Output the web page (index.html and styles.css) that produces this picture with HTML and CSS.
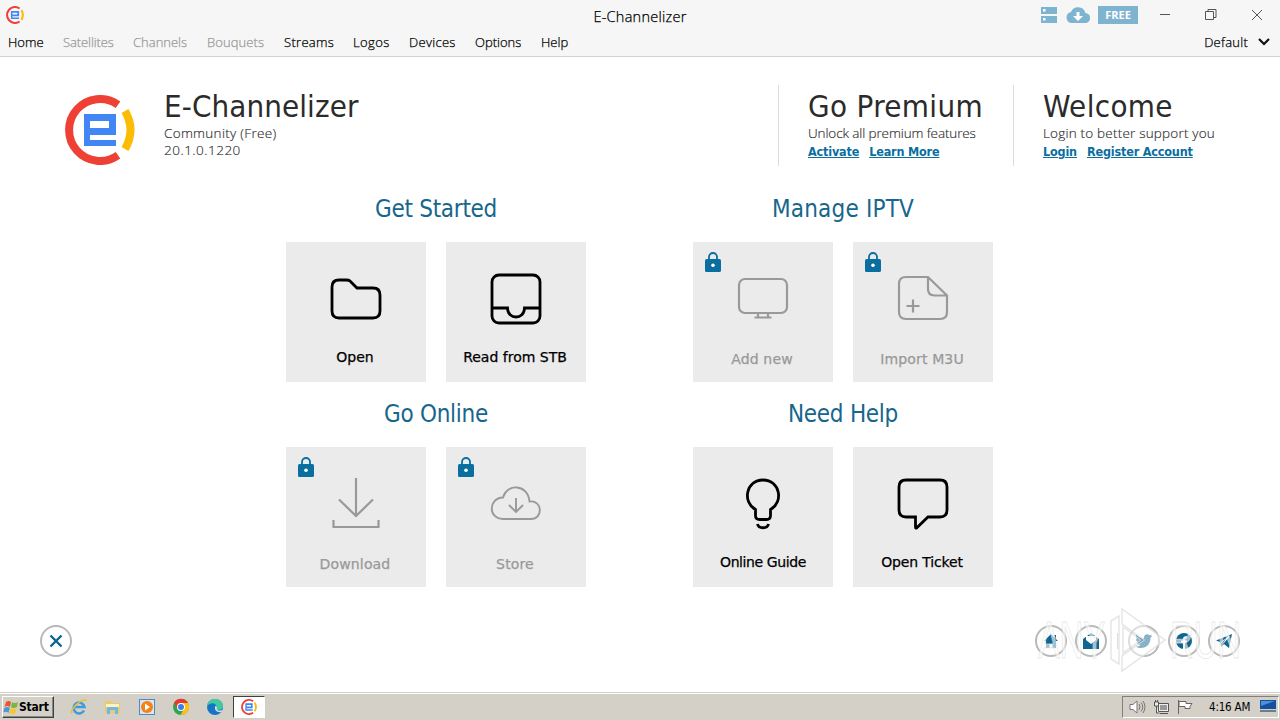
FILE: index.html
```
<!DOCTYPE html>
<html lang="en">
<head>
    <meta charset="UTF-8">
    <meta name="viewport" content="width=device-width, initial-scale=1.0">
    <title>E-Channelizer</title>
    <link rel="stylesheet" href="styles.css">
</head>
<body>
    <!-- shared symbols -->
    <svg class="symbols" width="0" height="0">
        <symbol id="logo" viewBox="0 0 70 70">
            <path d="M53 9.700A31 31 0 1 0 53 60.300" fill="none" stroke="#ee4035" stroke-width="8"/>
            <path d="M60 16Q71 35 60 54" fill="none" stroke="#fbbc05" stroke-width="8"/>
            <path fill="#4285f4" fill-rule="evenodd" d="M19 19h32v21H25v5h26v6H19zM25 26v7h19v-7z"/>
        </symbol>
        <symbol id="lock" viewBox="0 0 16 20">
            <path d="M4 8V5a4 4 0 0 1 8 0v3" fill="none" stroke="#0a6e9f" stroke-width="1.8"/>
            <rect x="0" y="7" width="16" height="13" rx="1.6" fill="#0a6e9f"/>
            <circle cx="8" cy="13.3" r="1.8" fill="#fff"/>
        </symbol>
    </svg>

    <header class="header">
        <div class="titlebar">
            <svg class="app-icon" width="18" height="18"><use href="#logo"/></svg>
            <div class="title">E-Channelizer</div>
            <div class="window-tools">
                <svg width="16" height="16" viewBox="0 0 16 16"><path fill="#7fb4d1" d="M0 0h16v7H0zM0 9h16v7H0z"/><path fill="#fff" d="M2 2h2.500v2.500H2zM2 11h2.500v2.500H2z"/></svg>
                <svg class="cloud" width="24" height="16" viewBox="0 0 24 16"><path fill="#7fb4d1" d="M6 16a5.500 5.500 0 0 1-1-10.900A7.500 7.500 0 0 1 19.300 6 5 5 0 0 1 19 16z"/><path fill="#fff" d="M10.500 5h3v4H17l-5 5-5-5h3.500z"/></svg>
                <span class="badge">FREE</span>
                <svg class="win-buttons" width="104" height="14" viewBox="0 0 104 14" fill="none" stroke="#555"><path d="M0 6.500h10"/><path d="M45.500 3.500h8v8h-8zM48 3.500v-2h8v8h-2.500M92 2l10 10M102 2L92 12"/></svg>
            </div>
        </div>
        <nav class="menu">
            <span class="home">Home</span>
            <span class="off satellites">Satellites</span>
            <span class="off channels">Channels</span>
            <span class="off bouquets">Bouquets</span>
            <span class="streams">Streams</span>
            <span class="logos">Logos</span>
            <span class="devices">Devices</span>
            <span class="options">Options</span>
            <span class="help">Help</span>
            <span class="profile">Default <svg width="12" height="8" viewBox="0 0 12 8"><path d="M1 1l5 5 5-5" fill="none" stroke="#111" stroke-width="2.200"/></svg></span>
        </nav>
    </header>

    <section class="top">
        <svg class="logo" width="70" height="70"><use href="#logo"/></svg>
        <div class="product">
            <h1>E-Channelizer</h1>
            <p class="community">Community (Free)</p>
            <p class="version">20.1.0.1220</p>
        </div>
        <div class="info premium">
            <h1>Go Premium</h1>
            <p>Unlock all premium features</p>
            <div class="links"><a>Activate</a><a>Learn More</a></div>
        </div>
        <div class="info welcome">
            <h1>Welcome</h1>
            <p>Login to better support you</p>
            <div class="links"><a>Login</a><a>Register Account</a></div>
        </div>
    </section>

    <main class="groups">
        <section>
            <h2>Get Started</h2>
            <div class="tiles">
                <div class="tile">
                    <svg width="52" height="52" viewBox="0 0 52 52"><path d="M9 7h7q3 0 4 1l7 7h16q7 0 7 7V38q0 7-7 7H9q-7 0-7-7V14q0-7 7-7z"/></svg>
                    <span>Open</span>
                </div>
                <div class="tile">
                    <svg width="52" height="52" viewBox="0 0 52 52"><rect x="2" y="2" width="48" height="48" rx="7"/><path d="M2 35h15.500c0 12 17 12 17 0H50"/></svg>
                    <span>Read from STB</span>
                </div>
            </div>
        </section>
        <section>
            <h2 class="wide">Manage IPTV</h2>
            <div class="tiles">
                <div class="tile locked">
                    <svg class="lock" width="16" height="20"><use href="#lock"/></svg>
                    <svg width="52" height="52" viewBox="0 0 52 52"><rect x="2" y="6" width="48" height="34" rx="6"/><path d="M21 40v4M31 40v4M17.500 44.500h17"/></svg>
                    <span>Add new</span>
                </div>
                <div class="tile locked">
                    <svg class="lock" width="16" height="20"><use href="#lock"/></svg>
                    <svg width="52" height="52" viewBox="0 0 52 52"><path d="M9 4h22l19 18.500V39q0 7-7 7H9q-7 0-7-7V11q0-7 7-7zM31 4v12q0 6.500 6.500 6.500H50M16 26.500v13M9.500 33h13"/></svg>
                    <span>Import M3U</span>
                </div>
            </div>
        </section>
        <section>
            <h2>Go Online</h2>
            <div class="tiles">
                <div class="tile locked">
                    <svg class="lock" width="16" height="20"><use href="#lock"/></svg>
                    <svg width="52" height="52" viewBox="0 0 52 52"><path d="M26 0v38M9 21.500L26 38l17-16.500M3.500 42v7h45v-7"/></svg>
                    <span>Download</span>
                </div>
                <div class="tile locked">
                    <svg class="lock" width="16" height="20"><use href="#lock"/></svg>
                    <svg class="thin" width="52" height="52" viewBox="0 0 52 52"><path d="M13 41C-2 41-2 20 13 19.500 17 5 38 6 39.500 23.500 53 22 53 41 41 41zM26 20v14M19 27l7 7 7-7"/></svg>
                    <span>Store</span>
                </div>
            </div>
        </section>
        <section>
            <h2>Need Help</h2>
            <div class="tiles">
                <div class="tile">
                    <svg width="52" height="52" viewBox="0 0 52 52"><path d="M18.500 31.500C5 24 9 2 26 2s21 22 7.500 29.500v6q0 4-4 4h-7q-4 0-4-4zM20.500 46c1 5 10 5 11 0"/></svg>
                    <span class="guide">Online Guide</span>
                </div>
                <div class="tile">
                    <svg width="52" height="52" viewBox="0 0 52 52"><path d="M9 2h34q7 0 7 7v23q0 7-7 7H31L19.500 50q-1 .5-1-1V39H9q-7 0-7-7V9q0-7 7-7z"/></svg>
                    <span class="ticket">Open Ticket</span>
                </div>
            </div>
        </section>
    </main>

    <footer class="footer">
        <div class="round"><svg width="14" height="14" viewBox="0 0 14 14"><path d="M1.500 1.500l11 11M12.500 1.500l-11 11" stroke="#0e6590" stroke-width="2.400"/></svg></div>
        <div class="social">
            <div class="round"><svg width="16" height="16" viewBox="0 0 16 16"><path d="M8 1l7 7h-2v7H9.500v-4h-3v4H3V8H1zM11 2h2v4z"/></svg></div>
            <div class="round"><svg width="18" height="18" viewBox="0 0 18 18"><path d="M1 7l8-6 8 6v10H1z"/><path d="M4 4h10v4l-5 4-5-4z" fill="#fff"/></svg></div>
            <i class="divider"></i>
            <div class="round"><svg width="18" height="18" viewBox="0 0 24 24"><path d="M23 5c-1 .4-1.600.6-2.500.7 1-.6 1.600-1.400 2-2.500-1 .5-2 1-3 1.200C16 1 11 4 12 8.500 8 8.300 4.500 6.500 2 3.500c-1.300 2.200-.6 5 1.500 6.300-.8 0-1.500-.2-2.200-.6 0 2.200 1.600 4.200 3.800 4.700-.7.200-1.400.2-2.100.1.600 1.900 2.300 3.200 4.300 3.300C5.300 19 3 19.600.7 19.300 11 25 21 18 20.700 7.500 21.600 6.800 22.400 6 23 5z"/></svg></div>
            <div class="round"><svg width="18" height="18" viewBox="0 0 18 18"><circle cx="9" cy="9" r="8"/><path d="M8 17v-6H6V8.500h2V7q0-3.300 4-2.700v2q-2-.3-2 1.200v1h2l-.4 2.500H10v6z" fill="#fff"/></svg></div>
            <div class="round"><svg width="18" height="16" viewBox="0 0 18 16"><path d="M1 7.500L17 1l-3 14-5-4-2.500 3L5 9z"/><path d="M6 9.500l8-6-6 7" fill="none" stroke="#fff"/></svg></div>
            <div class="watermark">
                <span class="any">ANY</span>
                <svg width="58" height="66" viewBox="0 0 58 66"><path fill-rule="evenodd" d="M13 2l43 31-43 31V49l22-16-22-16zM2 14l8-5v48l-8-5zM14 20l18 13-18 13z"/></svg>
                <span class="run">RUN</span>
            </div>
        </div>
    </footer>

    <div class="taskbar">
        <div class="start">
            <svg width="16" height="16" viewBox="0 0 16 16"><path d="M3 3q3-2 5 0L7 8Q4 6 1.500 8z" fill="#e9572b"/><path d="M9 3.300q3 1.500 6-.3L14 8q-3 2-6 .2z" fill="#75b943"/><path d="M1.300 9q3-2 5.500 0L5.500 14q-2-2-5.200-.5z" fill="#4b96d2"/><path d="M7.800 9.300q3 1.500 6-.2L12.500 14q-3 2-6 .3z" fill="#fac52d"/></svg>
            <b>Start</b>
        </div>
        <div class="apps">
            <svg width="18" height="18" viewBox="0 0 18 18"><path d="M14 12.500a5.500 5.500 0 1 1 .5-3.500H4.500" fill="none" stroke="#3c9cdc" stroke-width="2.600"/><path d="M2 15.500C-1 12 12-.5 16.500 2.500" fill="none" stroke="#e9bf3c" stroke-width="1.600"/></svg>
            <svg width="18" height="18" viewBox="0 0 18 18"><path d="M1 3h6l1 2h8v10H1z" fill="#e9ca6d"/><path d="M2 6h13v3H2z" fill="#fff3bd"/><path d="M3 16V10q0-1 1-1h9q1 0 1 1v6h-3v-4H6v4z" fill="#6fb8e0"/></svg>
            <svg width="18" height="18" viewBox="0 0 18 18"><rect x="1.500" y="1.500" width="15" height="15" fill="#d6e6f3" stroke="#4b8bc6"/><circle cx="9" cy="9" r="6" fill="#f58216"/><path d="M7 5.500l5 3.500-5 3.500z" fill="#fff"/></svg>
            <svg width="18" height="18" viewBox="0 0 18 18"><circle cx="9" cy="9" r="8" fill="#32a350"/><path d="M2 5a8 8 0 0 1 14 0H9L6 11z" fill="#e33b2e"/><path d="M16 5a8 8 0 0 1-7.500 12L12 11 9 5z" fill="#fbc116"/><circle cx="9" cy="9" r="4" fill="#fff"/><circle cx="9" cy="9" r="3" fill="#3d7de8"/></svg>
            <svg width="18" height="18" viewBox="0 0 18 18"><circle cx="9" cy="9" r="8" fill="#1774c5"/><path d="M1 9C1-2 17-1 17 8q0 4-5 4-2 0-1.500-2C11 4 3 4 1 9z" fill="#43c9a0"/><path d="M9 8q-1 7 6.500 6l1-2Q10 14 11 9.500 11 8 9 8z" fill="#d5dfe1"/></svg>
            <div class="active-app"><svg width="16" height="16"><use href="#logo"/></svg></div>
        </div>
        <div class="tray">
            <svg width="17" height="16" viewBox="0 0 17 16" fill="#fff" stroke="#777"><path d="M1 5.500h3L8 2v12l-4-3.500H1z"/><path d="M10 5q2 3 0 6M12 3.500q3.500 4.500 0 9M14 2q4 6 0 12" fill="none"/></svg>
            <svg width="17" height="16" viewBox="0 0 17 16" fill="#eee" stroke="#555"><path d="M5.500 4.500h10v8h-10zM7 14.500h8M1.500 3v4h4V3zM2.500 1v2M4.500 1v2M3.500 7v7h3"/><path fill="#999" stroke="none" d="M7 6h7v5H7z"/></svg>
            <svg width="17" height="16" viewBox="0 0 17 16" fill="#fff" stroke="#666"><path d="M1.500 1v14M2 2.500h7v2h6l-2 3 0 2H8v-2H2z"/></svg>
            <span>4:16 AM</span>
            <svg class="desktop" width="16" height="13" viewBox="0 0 16 13"><path d="M0 0h16v9H0z" fill="#174f9f"/><path d="M1 1h14L1 6z" fill="#4b91d8"/><path d="M0 10h16v2H0z" fill="#6b7c92"/></svg>
        </div>
    </div>
</body>
</html>
```
FILE: styles.css
```
* {
    box-sizing: border-box;
}
body {
    margin: 0;
    width: 1280px;
    height: 720px;
    overflow: hidden;
    background-color: #fff;
    color: #2b2b2b;
    font-family: "DejaVu Sans Condensed", "DejaVu Sans", sans-serif;
    display: flex;
    flex-direction: column;
}
h1, h2, p {
    margin: 0;
    font-weight: normal;
    white-space: nowrap;
}
svg {
    display: block;
    flex: none;
}
.symbols {
    position: absolute;
}

/* header */
.header {
    height: 57px;
    flex: none;
    background-color: #f6f6f6;
    border-bottom: 1px solid #d3d3d3;
    font-family: "Open Sans", sans-serif;
    color: #000;
}
.titlebar {
    height: 32px;
    display: grid;
    grid-template-columns: 500px 280px 500px;
    align-items: center;
}
.app-icon {
    margin: -2px 0 0 6px;
}
.title {
    text-align: center;
    font-size: 14.5px;
    font-weight: 300;
    letter-spacing: .25px;
    padding-top: 1px;
    -webkit-text-stroke: .25px;
}
.window-tools {
    display: flex;
    align-items: center;
    padding: 0 0 2px 261px;
}
.cloud {
    margin-left: 9px;
}
.badge {
    width: 40px;
    height: 18px;
    margin-left: 8px;
    background-color: #7fb4d1;
    color: #fff;
    font-size: 11px;
    font-weight: bold;
    line-height: 18px;
    text-align: center;
}
.win-buttons {
    margin-left: 22px;
}
.menu {
    display: flex;
    gap: 19px;
    padding-left: 8px;
    font-size: 13px;
    font-weight: 300;
    line-height: 20px;
    white-space: nowrap;
    -webkit-text-stroke: .25px;
}
.off {
    color: #999;
}
.home {
    width: 36px;
}
.satellites {
    width: 51px;
    letter-spacing: -.1px;
}
.channels {
    width: 55px;
}
.bouquets {
    width: 58px;
    letter-spacing: .1px;
}
.streams {
    width: 50px;
    letter-spacing: .3px;
}
.logos {
    width: 37px;
    letter-spacing: .4px;
}
.devices {
    width: 47px;
    letter-spacing: .3px;
}
.options {
    width: 47px;
}
.profile {
    margin-left: auto;
    margin-right: 10px;
    display: flex;
    align-items: center;
    gap: 10px;
    letter-spacing: .25px;
}

/* product info */
.top {
    display: flex;
    height: 109px;
    padding: 28px 0 0 65px;
    flex: none;
}
.logo {
    margin-top: 10px;
}
.product {
    width: 643px;
    padding-left: 29px;
}
h1 {
    font-size: 31px;
    line-height: 42px;
    margin-bottom: -2px;
    letter-spacing: .1px;
}
.info h1 {
    letter-spacing: .35px;
}
.top p {
    font-size: 13.5px;
    line-height: 17px;
    font-family: "Open Sans", sans-serif;
    font-weight: 300;
    letter-spacing: .2px;
    -webkit-text-stroke: .15px;
}
.top .community {
    letter-spacing: .3px;
}
.top .version {
    letter-spacing: .5px;
}
.top .premium p {
    letter-spacing: -.12px;
}
.info {
    width: 235px;
    height: 81px;
    padding-left: 29px;
    border-left: 1px solid #ddd;
    flex: none;
}
.links {
    display: flex;
    gap: 10px;
    font-size: 12.5px;
    letter-spacing: -.17px;
    font-weight: bold;
    line-height: 20px;
    color: #0a6e9f;
    text-decoration: underline;
    white-space: nowrap;
}

/* tiles */
.groups {
    display: grid;
    grid-template-columns: 300px 300px;
    column-gap: 107px;
    padding: 21px 0 0 286px;
}
.groups section {
    height: 205px;
}
h2 {
    height: 55px;
    font-size: 24px;
    line-height: 44px;
    letter-spacing: -.27px;
    color: #17668c;
    text-align: center;
}
.wide {
    letter-spacing: .2px;
}
.tiles {
    display: flex;
    gap: 20px;
}
.tile {
    position: relative;
    width: 140px;
    height: 140px;
    padding-top: 31px;
    background-color: #ebebeb;
    color: #000;
    display: flex;
    flex-direction: column;
    align-items: center;
    font-family: "DejaVu Sans", sans-serif;
    font-size: 14px;
    white-space: nowrap;
    fill: none;
    stroke: #000;
    stroke-width: 2.800;
}
.tile span {
    margin: 22px 2px 0 0;
    line-height: 20px;
    -webkit-text-stroke: .25px;
}
.tile .guide {
    margin-right: 0;
    letter-spacing: -.4px;
}
.tile .ticket {
    letter-spacing: -.15px;
}
.locked {
    color: #999;
    stroke: #999;
    stroke-width: 2.200;
}
.locked span {
    margin-top: 24px;
    letter-spacing: .15px;
}
.thin {
    stroke-width: 1.900;
}
.lock {
    position: absolute;
    left: 12px;
    top: 10px;
    stroke: none;
}

/* footer */
.footer {
    display: flex;
    justify-content: space-between;
    padding: 28px 40px 0;
    height: 95px;
    flex: none;
}
.round {
    width: 32px;
    height: 32px;
    border: 2px solid #b9b9b9;
    border-radius: 50%;
    display: flex;
    align-items: center;
    justify-content: center;
    fill: #0e6590;
}
.social {
    position: relative;
    display: flex;
    gap: 8px;
    height: 32px;
}
.divider {
    width: 1px;
    height: 16px;
    margin: 8px 2px 0;
    background-color: #bbb;
}
.watermark {
    position: absolute;
    left: 3px;
    top: -18px;
    display: flex;
    align-items: center;
    font-family: "Liberation Sans", sans-serif;
    font-size: 52px;
    line-height: 66px;
    color: rgba(255, 255, 255, .6);
    -webkit-text-stroke: 1px rgba(222, 222, 222, .7);
}
.watermark span {
    transform: scaleX(.63);
    transform-origin: left;
}
.watermark .any {
    width: 70px;
}
.watermark .run {
    width: 62px;
}
.watermark svg {
    fill: rgba(255, 255, 255, .5);
    stroke: rgba(222, 222, 222, .8);
    stroke-width: 1.500;
    margin: 0 3px 0 1px;
}

/* taskbar */
.taskbar {
    height: 28px;
    margin-top: auto;
    flex: none;
    background-color: #d4d0c8;
    border-top: 1px solid #d4d0c8;
    box-shadow: inset 0 1px #fff;
    display: flex;
    align-items: center;
    color: #000;
}
.start {
    width: 52px;
    height: 22px;
    margin: 1px 0 0 2px;
    display: flex;
    align-items: center;
    border: 1px solid;
    border-color: #fff #404040 #404040 #fff;
    box-shadow: inset -1px -1px #888;
    font-size: 12px;
    letter-spacing: -.2px;
}
.apps {
    display: flex;
    align-items: center;
    gap: 16px;
    margin: 0 0 0 16px;
}
.active-app {
    width: 32px;
    height: 22px;
    margin-left: -7px;
    display: flex;
    align-items: center;
    justify-content: center;
    background-color: #fff;
    border: 1px solid;
    border-color: #404040 #fff #fff #404040;
}
.tray {
    width: 157px;
    height: 22px;
    margin: 0 1px 0 auto;
    padding-left: 6px;
    display: flex;
    align-items: center;
    gap: 7px;
    border: 1px solid;
    border-color: #808080 #fff #fff #808080;
    font-size: 11.5px;
    white-space: nowrap;
}
.tray span {
    width: 41px;
    margin-left: 8px;
    letter-spacing: -.2px;
}
.desktop {
    margin-left: 3px;
}
```
